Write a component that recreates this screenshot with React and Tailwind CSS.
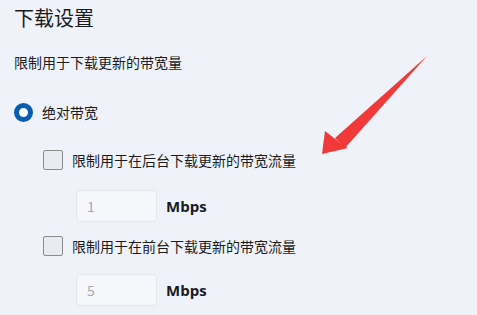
export default function App() {
  const font = { fontFamily: '"Noto Sans CJK SC", "Noto Sans", sans-serif' };
  return (
    <div className="relative w-[477px] h-[315px] overflow-hidden bg-[#eff2f9] text-[#1b1b1b]" style={font}>
      <div className="flex flex-col pl-[14px] pt-[4px]">
        <div className="text-[20px] leading-[28px]">下载设置</div>
        <div className="mt-[20px] text-[14px] leading-[20px]">限制用于下载更新的带宽量</div>
        <div className="mt-[30px] flex items-center h-[20px]">
          <div className="w-[19px] h-[19px] rounded-full border-[5px] border-[#0a5cb0] bg-white" />
          <span className="ml-[9px] text-[14px] leading-[20px]">绝对带宽</span>
        </div>
        <div className="mt-[28px] ml-[29px] flex items-center h-[20px]">
          <div className="w-[20px] h-[20px] rounded-[2px] border border-[#8c8c8c] bg-[#e8ebf1]" />
          <span className="ml-[9px] text-[14px] leading-[20px]">限制用于在后台下载更新的带宽流量</span>
        </div>
        <div className="mt-[20px] ml-[62px] flex items-center h-[32px]">
          <div className="w-[81px] h-[32px] rounded-[4px] border border-[#e3e6ec] bg-[#f5f7fb] flex items-center pl-[10px] text-[14px] text-[#a8a8a8]">1</div>
          <span className="ml-[9px] text-[15px] font-bold" style={{ fontFamily: '"Open Sans", sans-serif' }}>Mbps</span>
        </div>
        <div className="mt-[14px] ml-[29px] flex items-center h-[20px]">
          <div className="w-[20px] h-[20px] rounded-[2px] border border-[#8c8c8c] bg-[#e8ebf1]" />
          <span className="ml-[9px] text-[14px] leading-[20px]">限制用于在前台下载更新的带宽流量</span>
        </div>
        <div className="mt-[18px] ml-[62px] flex items-center h-[32px]">
          <div className="w-[81px] h-[32px] rounded-[4px] border border-[#e3e6ec] bg-[#f5f7fb] flex items-center pl-[10px] text-[14px] text-[#a8a8a8]">5</div>
          <span className="ml-[9px] text-[15px] font-bold" style={{ fontFamily: '"Open Sans", sans-serif' }}>Mbps</span>
        </div>
      </div>
      <svg className="absolute left-0 top-0" width="477" height="315" viewBox="0 0 477 315">
        <polygon points="427,56 335,138 345,148" fill="#f03a3a" />
        <polygon points="322,154 325,131 334,138 343,145 348,148" fill="#f03a3a" />
      </svg>
    </div>
  );
}
